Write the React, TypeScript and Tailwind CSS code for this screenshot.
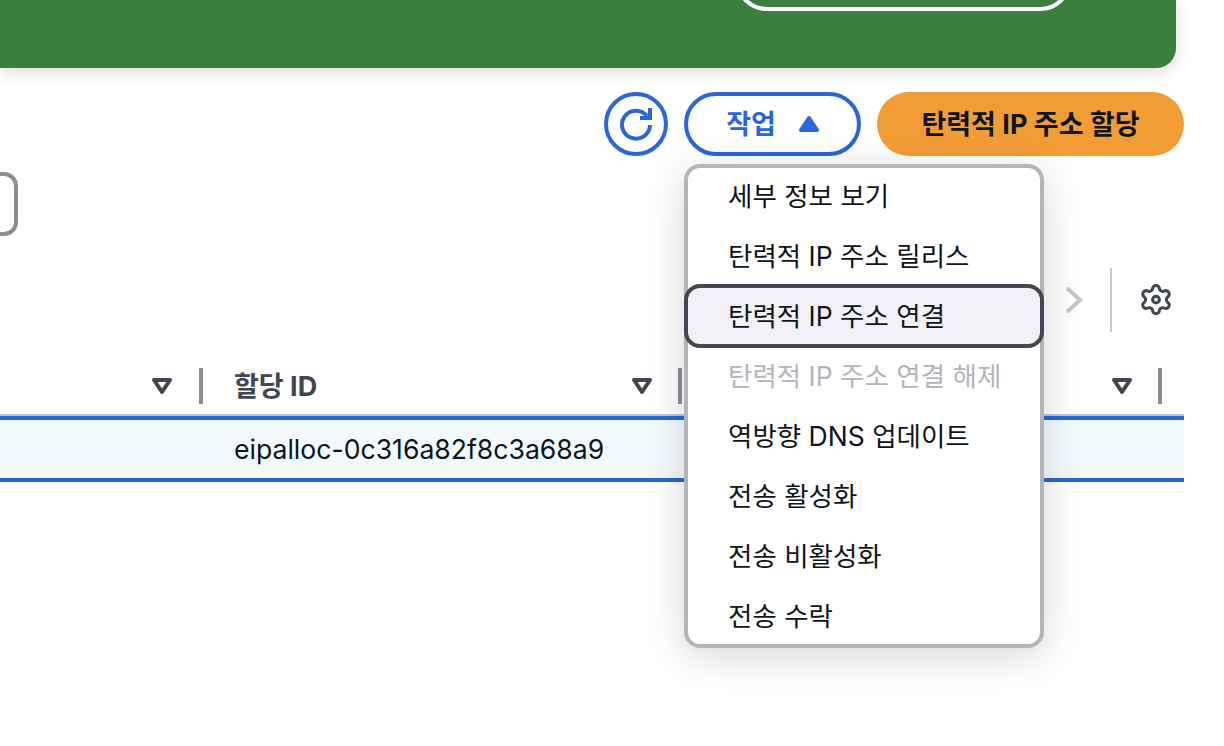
const font = "font-['Inter','Noto_Sans_CJK_KR',sans-serif]";

const menuItems = [
  { label: "세부 정보 보기" },
  { label: "탄력적 IP 주소 릴리스" },
  { label: "탄력적 IP 주소 연결", active: true },
  { label: "탄력적 IP 주소 연결 해제", disabled: true },
  { label: "역방향 DNS 업데이트" },
  { label: "전송 활성화" },
  { label: "전송 비활성화" },
  { label: "전송 수락" },
];

function SortIcon() {
  return (
    <svg width="22" height="18" viewBox="0 0 22 18" className="shrink-0">
      <path d="M3 3 H19 L11 15 Z" fill="none" stroke="#424650" strokeWidth="4" strokeLinejoin="round" />
    </svg>
  );
}

function RefreshIcon() {
  return (
    <svg width="36" height="36" viewBox="0 0 36 36" fill="none" stroke="#2a66d9" strokeWidth="4">
      <path d="M29 10 A14 14 0 1 0 32 19" />
      <path d="M32 2 V12 H22" />
    </svg>
  );
}

function GearIcon() {
  return (
    <svg width="34" height="34" viewBox="0 0 24 24" fill="none" stroke="#424650" strokeWidth="2.1" strokeLinejoin="round">
      <path d="M9.6 3.4a2.4 2.4 0 0 1 4.8 0 2.4 2.4 0 0 0 3.6 1.5 2.4 2.4 0 0 1 2.4 4.1 2.4 2.4 0 0 0 0 4 2.4 2.4 0 0 1-2.4 4.1 2.4 2.4 0 0 0-3.6 1.5 2.4 2.4 0 0 1-4.8 0A2.4 2.4 0 0 0 6 17.1 2.4 2.4 0 0 1 3.6 13a2.4 2.4 0 0 0 0-4A2.4 2.4 0 0 1 6 4.9a2.4 2.4 0 0 0 3.6-1.5Z" />
      <circle cx="12" cy="11" r="2.4" />
    </svg>
  );
}

export default function App() {
  return (
    <div className={`relative w-[1224px] h-[746px] overflow-hidden bg-white ${font}`}>
      {/* green flash bar */}
      <div className="h-[68px] mr-[48px] bg-[#3a7f3c] rounded-br-[20px] shadow-[0_4px_16px_rgba(0,7,22,0.14)] flex justify-end items-end pr-[104px] pb-[57px]">
        <div className="w-[337px] h-[64px] shrink-0 rounded-[32px] border-[4px] border-white" />
      </div>

      {/* header actions */}
      <div className="mt-[24px] pr-[40px] flex justify-end gap-4">
        <button className="w-[64px] h-[64px] rounded-full border-[4px] border-[#2a66d9] bg-white flex items-center justify-center">
          <RefreshIcon />
        </button>
        <button className="w-[177px] h-[64px] rounded-[32px] border-[4px] border-[#2a66d9] bg-white flex items-center justify-center gap-[22px] text-[#2a66d9] text-[27px] font-bold">
          <span className="ml-[1px] mt-[2px]">작업</span>
          <svg width="22" height="18" viewBox="0 0 22 18">
            <path d="M11 3 L19 15 H3 Z" fill="#2a66d9" stroke="#2a66d9" strokeWidth="4" strokeLinejoin="round" />
          </svg>
        </button>
        <button className="w-[307px] h-[64px] rounded-[32px] bg-[#f29c36] flex items-center justify-center text-[#0f141a] text-[27px] font-bold">
          <span className="mt-[2px]">탄력적 IP 주소 할당</span>
        </button>
      </div>

      {/* filter input end */}
      <div className="mt-[16px] w-[18px] h-[64px] rounded-r-[14px] border-[4px] border-l-0 border-[#8c8c94]" />

      {/* pagination */}
      <div className="mt-[32px] h-[64px] pr-[51px] flex justify-end items-center">
        <svg width="20" height="28" viewBox="0 0 20 28" fill="none" stroke="#c6c6cd" strokeWidth="4">
          <path d="M3 2 L16 14 L3 26" />
        </svg>
        <div className="ml-[26px] w-[2px] h-[64px] bg-[#c6c6cd]" />
        <div className="ml-[27px] mt-[2px]">
          <GearIcon />
        </div>
      </div>

      {/* table header */}
      <div className="mt-[36px] h-[36px] w-[1184px] flex">
        <div className="w-[203px] flex items-center justify-end">
          <SortIcon />
          <div className="ml-[26px] w-[4px] h-[36px] bg-[#8c8c94]" />
        </div>
        <div className="w-[479px] flex items-center">
          <span className="ml-[31px] mt-[2px] text-[#424650] text-[27px] font-bold">할당 ID</span>
          <div className="ml-auto flex items-center">
            <div className="ml-[1px]">
              <SortIcon />
            </div>
            <div className="ml-[25px] w-[4px] h-[36px] bg-[#8c8c94]" />
          </div>
        </div>
        <div className="w-[480px] flex items-center justify-end">
          <div className="ml-[1px]">
            <SortIcon />
          </div>
          <div className="ml-[25px] w-[4px] h-[36px] bg-[#8c8c94]" />
        </div>
      </div>

      {/* selected row */}
      <div className="mt-[10px] w-[1184px] border-t-[2px] border-[#c6c6cd]">
        <div className="h-[66px] border-y-[4px] border-[#2a66d9] bg-[#f2fafd] flex items-center pl-[234px] pt-[2px] text-[#0f141a] text-[26.6px]">
          eipalloc-0c316a82f8c3a68a9
        </div>
      </div>

      {/* actions dropdown */}
      <div className="absolute left-[684px] top-[164px] w-[360px] h-[484px] rounded-[16px] border-[4px] border-[#b4b4bb] bg-white shadow-[0_8px_40px_rgba(0,7,22,0.16)]">
        <div className="-mt-[3px]">
          {menuItems.map((item) => (
            <div
              key={item.label}
              className={
                item.active
                  ? "relative z-10 -mx-[4px] h-[64px] -mt-[1px] -mb-[3px] pl-[40px] pt-[2px] flex items-center rounded-[16px] border-[4px] border-[#424650] bg-[#f1f1f7] text-[#0f141a] text-[26.5px]"
                  : item.disabled
                  ? "h-[60px] pl-[40px] pt-[3px] flex items-center text-[#b4b4bb] text-[26.5px]"
                  : "h-[60px] pl-[40px] pt-[3px] flex items-center text-[#0f141a] text-[26.5px]"
              }
            >
              {item.label}
            </div>
          ))}
        </div>
      </div>
    </div>
  );
}
